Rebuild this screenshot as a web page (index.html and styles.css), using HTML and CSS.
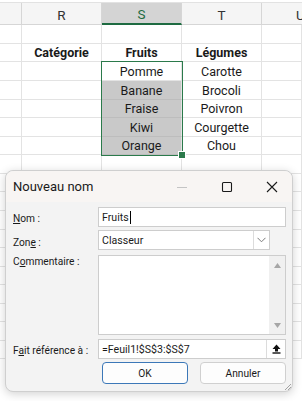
FILE: index.html
```
<!DOCTYPE html>
<html lang="fr">
<head>
<meta charset="utf-8">
<link rel="stylesheet" href="styles.css">
</head>
<body>
<div class="sheet">
  <div class="hdr corner"></div>
  <div class="hdr">R</div>
  <div class="hdr sel-hdr">S</div>
  <div class="hdr">T</div>
  <div class="hdr u">U</div>

  <div class="c rh"></div><div class="c"></div><div class="c"></div><div class="c"></div><div class="c"></div>
  <div class="c rh"></div><div class="c b">Catégorie</div><div class="c b">Fruits</div><div class="c b">Légumes</div><div class="c"></div>
  <div class="c rh"></div><div class="c"></div><div class="c">Pomme</div><div class="c">Carotte</div><div class="c"></div>
  <div class="c rh"></div><div class="c"></div><div class="c g">Banane</div><div class="c">Brocoli</div><div class="c"></div>
  <div class="c rh"></div><div class="c"></div><div class="c g">Fraise</div><div class="c">Poivron</div><div class="c"></div>
  <div class="c rh"></div><div class="c"></div><div class="c g">Kiwi</div><div class="c">Courgette</div><div class="c"></div>
  <div class="c rh"></div><div class="c"></div><div class="c g">Orange</div><div class="c">Chou</div><div class="c"></div>
  <div class="c rh"></div><div class="c"></div><div class="c"></div><div class="c"></div><div class="c"></div>
  <div class="c rh"></div><div class="c"></div><div class="c"></div><div class="c"></div><div class="c"></div>
  <div class="c rh"></div><div class="c"></div><div class="c"></div><div class="c"></div><div class="c"></div>
  <div class="c rh"></div><div class="c"></div><div class="c"></div><div class="c"></div><div class="c"></div>
  <div class="c rh"></div><div class="c"></div><div class="c"></div><div class="c"></div><div class="c"></div>
  <div class="c rh"></div><div class="c"></div><div class="c"></div><div class="c"></div><div class="c"></div>
  <div class="c rh"></div><div class="c"></div><div class="c"></div><div class="c"></div><div class="c"></div>
  <div class="c rh"></div><div class="c"></div><div class="c"></div><div class="c"></div><div class="c"></div>
  <div class="c rh"></div><div class="c"></div><div class="c"></div><div class="c"></div><div class="c"></div>
  <div class="c rh"></div><div class="c"></div><div class="c"></div><div class="c"></div><div class="c"></div>
  <div class="c rh"></div><div class="c"></div><div class="c"></div><div class="c"></div><div class="c"></div>

  <div class="selection"></div>
</div>

<div class="dialog">
  <div class="titlebar">
    <span class="title">Nouveau nom</span>
    <div class="wctrl">
      <svg class="wi min" width="12" height="12" viewBox="0 0 12 12"><path d="M1 6.5h10" stroke="#c4c4c4" stroke-width="1"/></svg>
      <svg class="wi" width="12" height="12" viewBox="0 0 12 12"><rect x="1.5" y="1.5" width="9" height="9" rx="1" fill="none" stroke="#1a1a1a" stroke-width="1.1"/></svg>
      <svg class="wi" width="12" height="12" viewBox="0 0 12 12"><path d="M1 1l10 10M11 1L1 11" stroke="#1a1a1a" stroke-width="1.1"/></svg>
    </div>
  </div>
  <div class="form">
    <label class="lbl"><u>N</u>om :</label>
    <div class="field"><span class="val">Fruits</span><span class="caret"></span></div>

    <label class="lbl">Zon<u>e</u> :</label>
    <div class="field select">
      <span class="val">Classeur</span>
      <span class="dd"><svg width="9" height="6" viewBox="0 0 9 6"><path d="M0.5 0.8l4 4 4-4" fill="none" stroke="#7a7a7a" stroke-width="1"/></svg></span>
    </div>

    <label class="lbl top">C<u>o</u>mmentaire :</label>
    <div class="field area">
      <div class="scroll">
        <svg width="7" height="5" viewBox="0 0 7 5"><path d="M3.5 0L7 5H0z" fill="#a6a6a6"/></svg>
        <svg width="7" height="5" viewBox="0 0 7 5"><path d="M0 0h7L3.5 5z" fill="#a6a6a6"/></svg>
      </div>
    </div>

    <label class="lbl">F<u>a</u>it référence à :</label>
    <div class="field ref">
      <span class="val">=Feuil1!$S$3:$S$7</span>
      <span class="refbtn"><svg width="9" height="10" viewBox="0 0 9 10"><path d="M4.5 0.5L8.5 5H6v2.5H3V5H0.5z" fill="#111"/><path d="M0.5 9h8" stroke="#111" stroke-width="1.4"/></svg></span>
    </div>

    <div class="buttons">
      <button class="btn ok">OK</button>
      <button class="btn">Annuler</button>
    </div>
  </div>
  <svg class="grip" width="7" height="7" viewBox="0 0 7 7"><path d="M7 1L1 7M7 4L4 7" stroke="#9a9a9a" stroke-width="0.9"/></svg>
</div>
</body>
</html>
```
FILE: styles.css
```
* { box-sizing: border-box; }
html, body { margin: 0; padding: 0; }
body {
  width: 302px;
  height: 401px;
  overflow: hidden;
  background: #fff;
  font-family: Roboto, "Noto Sans", sans-serif;
  position: relative;
}
.sheet {
  position: relative;
  display: grid;
  grid-template-columns: 22px 80px 80px 80px 40px;
  grid-template-rows: 22px 19px 18px 19px 19px 18px 19px 18px 19px 18px 19px 19px 18px 19px 18px 19px 18px 19px 18px;
  margin-top: 2px;
  border-top: 1px solid #e2e2e2;
}
.hdr {
  background: #f5f5f5;
  border-right: 1px solid #d6d6d6;
  border-bottom: 1px solid #d6d6d6;
  display: flex;
  align-items: center;
  justify-content: center;
  font-size: 13.5px;
  color: #333;
  padding-top: 2px;
}
.hdr.u {
  justify-content: flex-start;
  padding-left: 34px;
  overflow: hidden;
  border-right: none;
}
.hdr.sel-hdr {
  background: #d4d4d4;
  color: #1e6b41;
  border-bottom: 2px solid #1e6b41;
}
.c {
  border-right: 1px solid #e3e3e3;
  border-bottom: 1px solid #e3e3e3;
  display: flex;
  align-items: center;
  justify-content: center;
  font-size: 12.5px;
  color: #1a1a1a;
  white-space: nowrap;
}
.c.b { font-weight: 700; }
.c.g { background: #c9c9c9; border-bottom-color: #bdbdbd; }
.selection {
  position: absolute;
  left: 101px;
  top: 58px;
  width: 82px;
  height: 95px;
  border: 1.5px solid #2b7a4b;
  pointer-events: none;
}
.selection::after {
  content: "";
  position: absolute;
  right: -4px;
  bottom: -4px;
  width: 6px;
  height: 6px;
  background: #2b7a4b;
  border: 1px solid #fff;
}

.dialog {
  position: absolute;
  left: 5px;
  top: 170px;
  width: 288px;
  height: 222px;
  background: #f3f3f3;
  border: 1px solid #cfcfcf;
  border-radius: 8px;
  box-shadow: 0 2px 10px rgba(0,0,0,0.18);
  color: #1a1a1a;
}
.titlebar {
  height: 31px;
  display: flex;
  align-items: center;
  justify-content: space-between;
  padding: 0 14px 0 7px;
  background: #f8f5f3;
  border-radius: 8px 8px 0 0;
}
.title { font-size: 13px; }
.wctrl { display: flex; align-items: center; gap: 33px; }
.form {
  display: grid;
  grid-template-columns: 85px 1fr;
  padding: 5px 6px 0 7px;
  align-items: center;
}
.lbl { font-size: 10.2px; white-space: nowrap; }
.lbl.top { align-self: start; padding-top: 1px; }
.field {
  height: 20px;
  background: #fff;
  border: 1px solid #cdcdcd;
  display: flex;
  align-items: center;
  font-size: 10.6px;
  padding-left: 3px;
  margin-bottom: 3px;
}
.caret { width: 1px; height: 13px; background: #000; margin-left: 1px; }
.field.select { width: 172px; padding-right: 0; margin-bottom: 5px; }
.select .val { flex: 1; }
.dd {
  width: 16px;
  height: 100%;
  border-left: 1px solid #dcdcdc;
  display: flex;
  align-items: center;
  justify-content: center;
}
.field.area {
  height: 80px;
  align-items: stretch;
  justify-content: flex-end;
  padding: 0;
  margin-bottom: 4px;
}
.scroll {
  width: 16px;
  background: #f0f0f0;
  display: flex;
  flex-direction: column;
  justify-content: space-between;
  align-items: center;
  padding: 7px 0 6px;
}
.field.ref { padding-right: 0; }
.ref .val { flex: 1; }
.refbtn {
  width: 19px;
  height: 100%;
  border-left: 1px solid #dcdcdc;
  display: flex;
  align-items: center;
  justify-content: center;
}
.buttons {
  grid-column: 2;
  display: flex;
  gap: 12px;
  padding-left: 4px;
}
.btn {
  width: 86px;
  height: 22px;
  font-family: inherit;
  font-size: 10.2px;
  color: #1a1a1a;
  background: #fdfdfd;
  border: 1px solid #d0d0d0;
  border-radius: 4px;
  padding: 0;
}
.btn.ok { border: 1.5px solid #3c78b8; }
.grip { position: absolute; right: 1px; bottom: 1px; }
```
